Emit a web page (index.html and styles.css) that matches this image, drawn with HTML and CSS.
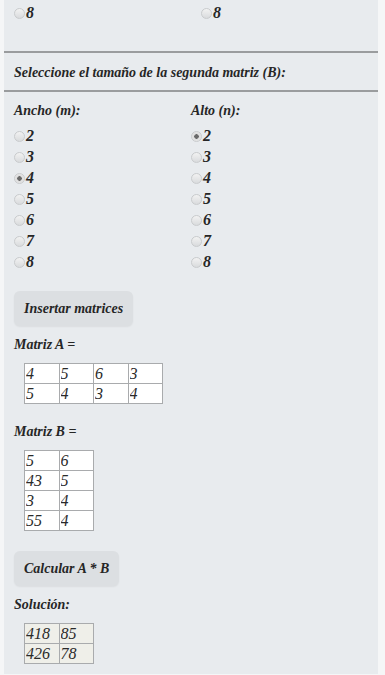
FILE: index.html
```html
<!DOCTYPE html>
<html lang="es">
<head>
  <meta charset="UTF-8">
  <meta name="viewport" content="width=device-width, initial-scale=1.0">
  <title>Multiplicación de matrices</title>
  <link rel="stylesheet" href="styles.css">
</head>
<body>
  <div class="panel">
    <!-- End of first matrix options -->
    <div class="cols top-row">
      <div class="col"><label class="opt"><input type="radio" name="am">8</label></div>
      <div class="col"><label class="opt"><input type="radio" name="an">8</label></div>
    </div>

    <hr>
    <p class="title">Seleccione el tamaño de la segunda matriz (B):</p>
    <hr>

    <!-- Second matrix size -->
    <div class="cols">
      <div class="col">
        <p class="label">Ancho (m):</p>
        <label class="opt"><input type="radio" name="bm">2</label>
        <label class="opt"><input type="radio" name="bm">3</label>
        <label class="opt"><input type="radio" name="bm" checked>4</label>
        <label class="opt"><input type="radio" name="bm">5</label>
        <label class="opt"><input type="radio" name="bm">6</label>
        <label class="opt"><input type="radio" name="bm">7</label>
        <label class="opt"><input type="radio" name="bm">8</label>
      </div>
      <div class="col">
        <p class="label">Alto (n):</p>
        <label class="opt"><input type="radio" name="bn" checked>2</label>
        <label class="opt"><input type="radio" name="bn">3</label>
        <label class="opt"><input type="radio" name="bn">4</label>
        <label class="opt"><input type="radio" name="bn">5</label>
        <label class="opt"><input type="radio" name="bn">6</label>
        <label class="opt"><input type="radio" name="bn">7</label>
        <label class="opt"><input type="radio" name="bn">8</label>
      </div>
    </div>

    <button class="button btn-insert">Insertar matrices</button>

    <p class="label mat-title">Matriz A =</p>
    <table class="matrix">
      <tr><td><input value="4"></td><td><input value="5"></td><td><input value="6"></td><td><input value="3"></td></tr>
      <tr><td><input value="5"></td><td><input value="4"></td><td><input value="3"></td><td><input value="4"></td></tr>
    </table>

    <p class="label mat-title mat-b">Matriz B =</p>
    <table class="matrix">
      <tr><td><input value="5"></td><td><input value="6"></td></tr>
      <tr><td><input value="43"></td><td><input value="5"></td></tr>
      <tr><td><input value="3"></td><td><input value="4"></td></tr>
      <tr><td><input value="55"></td><td><input value="4"></td></tr>
    </table>

    <button class="button btn-calc">Calcular A * B</button>

    <p class="label mat-title">Solución:</p>
    <table class="matrix result">
      <tr><td><input value="418" readonly></td><td><input value="85" readonly></td></tr>
      <tr><td><input value="426" readonly></td><td><input value="78" readonly></td></tr>
    </table>
  </div>
</body>
</html>
```

FILE: styles.css
```css
html, body {
  margin: 0;
  padding: 0;
  background-color: #f5f6f7;
}
body {
  font-family: "Liberation Serif", "Times New Roman", serif;
  font-style: italic;
  font-weight: bold;
  font-size: 14px;
  color: #262626;
}
.panel {
  background-color: #e8ebee;
  margin: 0 7px 3px 4px;
  padding: 2px 10px 10px 10px;
  overflow: hidden;
}
.cols {
  display: grid;
  grid-template-columns: 177px 1fr;
}
.col {
  display: flex;
  flex-direction: column;
}
.top-row {
  margin-bottom: 28px;
}
.top-row .col + .col {
  padding-left: 10px;
}
hr {
  border: none;
  height: 2px;
  background-color: #9a9c9e;
  margin: 0 -10px;
}
p {
  margin: 0;
  line-height: 21px;
}
.title {
  margin: 9px 0 7px;
}
hr + .cols {
  margin-top: 8px;
}
.label {
  margin-bottom: 4px;
}
.opt {
  display: flex;
  align-items: center;
  height: 21px;
  font-size: 16px;
}
.opt input {
  appearance: none;
  -webkit-appearance: none;
  width: 11px;
  height: 11px;
  margin: 0 1px 0 0;
  border: 1px solid #c9cbcd;
  border-radius: 50%;
  background: linear-gradient(#f2f2f2, #d9dbdd);
  box-sizing: border-box;
  position: relative;
  top: 1px;
}
.opt input:checked {
  background: radial-gradient(circle, #6a6a6a 0, #6a6a6a 2px, #dcdcdc 2.5px, #eeeeee 100%);
}
.button {
  display: block;
  font: inherit;
  color: #262626;
  background-color: #dcdfe2;
  border: none;
  border-radius: 6px;
  height: 35px;
  padding: 0 10px;
  box-shadow: 0 1px 2px rgba(0, 0, 0, 0.06);
}
.btn-insert {
  margin-top: 19px;
}
.btn-calc {
  margin-top: 20px;
}
.mat-title {
  margin: 8px 0 8px;
}
.mat-b {
  margin-top: 17px;
}
.matrix {
  border-collapse: collapse;
  margin-left: 10px;
  border: 1px solid #b5b7b9;
}
.matrix td {
  border: 1px solid #a9abad;
  padding: 0;
}
.matrix input {
  display: block;
  width: 33.5px;
  height: 19px;
  box-sizing: border-box;
  border: none;
  padding: 0 1px;
  font-family: "Liberation Serif", "Times New Roman", serif;
  font-style: italic;
  font-weight: normal;
  font-size: 16px;
  color: #2a2a2a;
  background-color: #ffffff;
}
.result input {
  background-color: #efefe9;
}
```
